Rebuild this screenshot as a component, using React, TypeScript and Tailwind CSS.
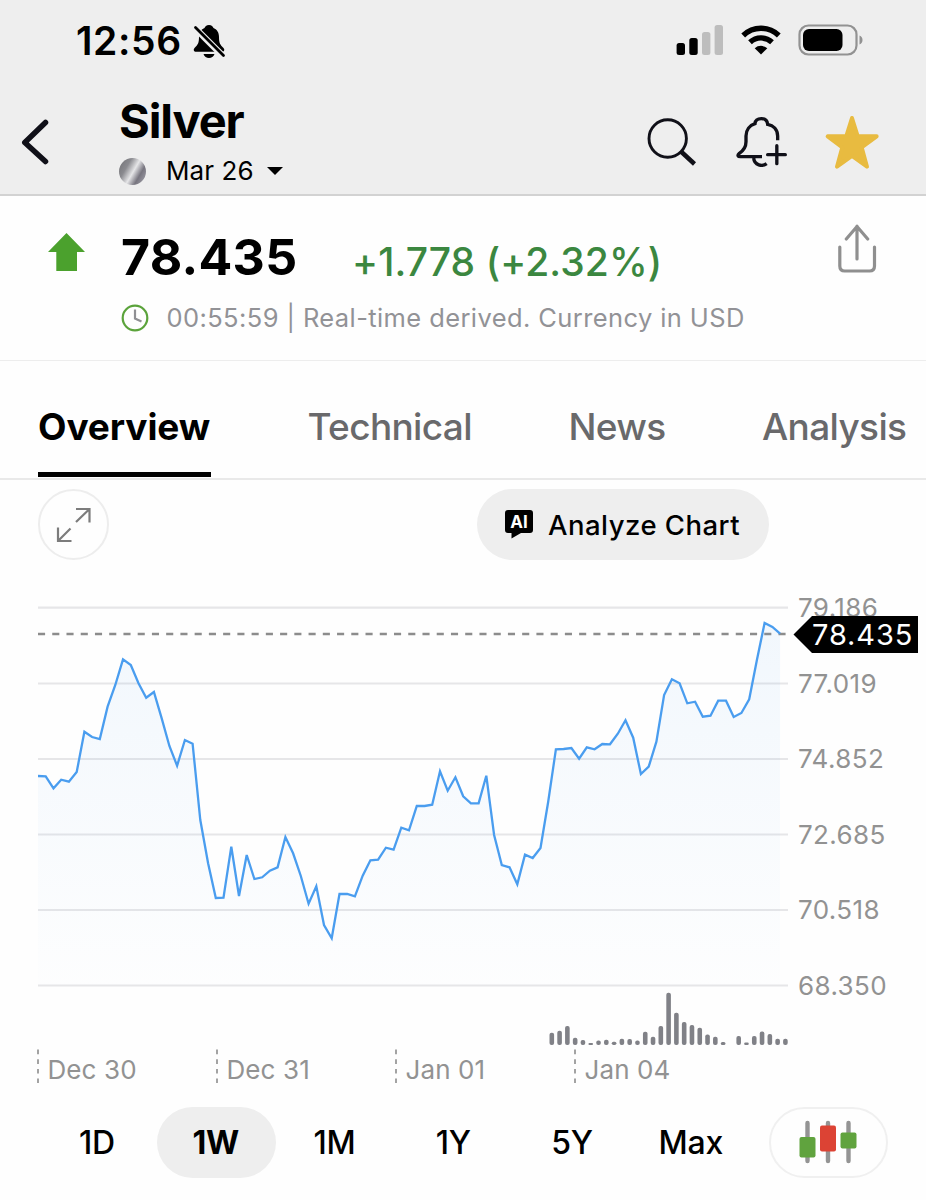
import clsx from "clsx";

// ── Chart data, in plot pixels ──
const STEP = 7.73;
const LINE = [
  558, 559, 595, 569, 575, 546, 425, 441, 447, 350, 285, 208, 225, 280, 323, 306, 385, 468, 527, 450,
  461, 690, 820, 924, 923, 770, 918, 795, 867, 862, 842, 832, 741, 790, 858, 941, 889, 1005, 1045, 912,
  912, 919, 857, 811, 809, 773, 779, 713, 721, 648, 648, 644, 544, 602, 562, 619, 640, 640, 557, 735,
  825, 832, 883, 794, 804, 774, 635, 478, 477, 474, 506, 472, 478, 462, 463, 431, 391, 443, 552, 530,
  455, 315, 268, 280, 340, 335, 380, 377, 332, 332, 381, 369, 328, 210, 99, 111, 131,
];

const VOLUME = [
  12.3, 14.3, 19, 7.3, 5, 2, 4.6, 5.3, 3.3, 6.3, 6, 4.6, 13.3, 8.3, 19, 52.3, 32.3, 23, 20, 17.3,
  10.6, 8.3, 3, 0, 9, 2.6, 9, 13.6, 11, 6.3, 6.3,
];

const GRID = [
  { label: "79.186", y: 607.7 },
  { label: "77.019", y: 683.5 },
  { label: "74.852", y: 759 },
  { label: "72.685", y: 834.5 },
  { label: "70.518", y: 910 },
  { label: "68.350", y: 985.5 },
];

const DATES = [
  { label: "Dec 30", x: 38 },
  { label: "Dec 31", x: 217 },
  { label: "Jan 01", x: 396 },
  { label: "Jan 04", x: 575 },
];

const RANGES = ["1D", "1W", "1M", "1Y", "5Y", "Max"];

const points = LINE.map((v, i) => `${(38 + i * STEP).toFixed(1)},${(590 + v / 3).toFixed(1)}`).join(" ");

function StatusBar() {
  return (
    <div className="flex h-[81px] items-center pl-[76px] pr-[62px]">
      <span className="w-[117px] text-[39px] font-semibold leading-none tracking-[0.6px]">12:56</span>
      <svg viewBox="0 0 34 36" className="h-[36px] w-[34px]">
        <path d="M16 2c-2.600 0-4 1.500-4.500 3C7.500 6.700 6 10 6 14c0 6-1 7.500-4.500 11-1.500 1.700-.6 3.800 1.500 3.800h26c2.200 0 3-2.100 1.500-3.800C27 21.500 26 20 26 14c0-4-1.500-7.300-5.500-9-.5-1.500-1.900-3-4.500-3zM10.500 31h11c-.8 2.700-3 4-5.500 4s-4.700-1.300-5.500-4z" />
        <path d="M0 3l31 31" stroke="#eee" strokeWidth="6.500" />
        <path d="M2.500 4.500l28 28" stroke="#000" strokeWidth="2.800" strokeLinecap="round" />
      </svg>
      <div className="ml-auto flex items-center gap-[17.500px]">
        <svg viewBox="0 0 47 31" className="h-[31px] w-[47px]">
          <rect x="0.600" y="18" width="8.400" height="12" rx="2.500" />
          <rect x="13.300" y="13" width="8.400" height="17" rx="2.500" />
          <rect x="26" y="7" width="8.400" height="23" rx="2.500" fill="#bdbdbd" />
          <rect x="38.600" y="0" width="8.400" height="30" rx="2.500" fill="#bdbdbd" />
        </svg>
        <svg viewBox="0 0 40 30" className="-mt-[1px] h-[30px] w-[40px]">
          <path d="M2.200 10.500a25.500 25.500 0 0 1 35.600 0M9 17.300a16 16 0 0 1 22 0" fill="none" stroke="#000" strokeWidth="5.400" />
          <path d="M20 29.500l-6.300-6.200a9.300 9.300 0 0 1 12.600 0z" />
        </svg>
        <svg viewBox="0 0 66 32" className="-mt-[1px] h-[32px] w-[66px]">
          <rect x="1.500" y="1.500" width="57" height="29" rx="9" fill="none" stroke="#929292" strokeWidth="2.200" />
          <rect x="5" y="5" width="39.500" height="22" rx="6" />
          <path d="M61.500 11.500c4 1.500 4 7.500 0 9z" fill="#929292" />
        </svg>
      </div>
    </div>
  );
}

function TitleBar() {
  return (
    <div className="flex h-[113px]">
      <svg viewBox="0 0 30 46" className="ml-[20px] mt-[38px] h-[46px] w-[30px]" fill="none" stroke="#101018" strokeWidth="5.500" strokeLinecap="round" strokeLinejoin="round">
        <path d="M25.500 3.500L4.800 23.500L25.500 42.500" />
      </svg>
      <div className="ml-[69px] mt-[15px] w-[520px]">
        <h1 className="text-[47px] font-bold leading-[50px] tracking-[-1.1px]">Silver</h1>
        <div className="mt-[5px] flex h-[40px] items-center">
          <span className="size-[27px] rounded-full bg-[linear-gradient(120deg,#77777b_8%,#8a8a8f_30%,#e6e6e8_52%,#77757f_72%,#a9a8b2_100%)]" />
          <span className="ml-[20px] text-[26px] leading-none tracking-[0.1px]">Mar 26</span>
          <svg viewBox="0 0 16 8" className="ml-[13px] h-[8px] w-[16px]">
            <path d="M0 0h16L8 8z" />
          </svg>
        </div>
      </div>
      <div className="mt-[34px] flex">
        <svg viewBox="0 0 56 56" className="ml-[2px] size-[56px]" fill="none" stroke="#101018">
          <circle cx="26.700" cy="23.500" r="18.700" strokeWidth="2.900" />
          <path d="M40 36.500l13.500 12.500" strokeWidth="4.500" />
        </svg>
        <svg viewBox="340 345 170 170" className="ml-[36px] size-[56.67px]" fill="none" stroke="#101018" strokeWidth="10">
          <path d="M474 421V408C474 388 461 376 444 373C443 360 435 356 425 356C415 356 407 360 406 371C390 376 379 390 379 408V425C379 440 372 451 359 460C352 466 355 470 362 470H427" />
          <path d="M402 474C404 496 428 501 441 491" />
          <path d="M471.500 437V491M444 464H497" strokeLinecap="round" />
        </svg>
        <svg viewBox="610 345 170 170" className="ml-[33px] size-[56.67px]" fill="#e8bb40" stroke="#e8bb40" strokeWidth="12" strokeLinejoin="round">
          <path d="M697 354L714 408L771 409L726 442L742 500L697 468L652 500L668 442L624 409L680 408Z" />
        </svg>
      </div>
    </div>
  );
}

function Quote() {
  return (
    <section className="h-[165px] border-b border-[#ededed] pt-[27px]">
      <div className="flex h-[68px] items-center">
        <svg viewBox="0 0 37 38" className="-mt-[10px] ml-[48px] h-[38px] w-[37px]" fill="#4ba12d">
          <path d="M18.500 0L37 19H29V38H8.300V19H0z" />
        </svg>
        <span className="ml-[36px] w-[231px] text-[50px] font-bold leading-none tracking-[0.3px]">78.435</span>
        <span className="mt-[8px] w-[485px] text-[39px] font-medium leading-none tracking-[0.1px] text-[#3b8740]">+1.778 (+2.32%)</span>
        <svg viewBox="0 0 40 50" className="-mt-[18px] h-[50px] w-[40px]" fill="none" stroke="#8f8f8f" strokeWidth="3.200" strokeLinecap="round" strokeLinejoin="round">
          <path d="M2.800 24V43q0 5 5 5H32.500q5 0 5-5V24M20 3V36M9.300 16L20 3.500L30.700 16" />
        </svg>
      </div>
      <div className="flex h-[54px] items-center">
        <svg viewBox="0 0 28 28" className="ml-[121px] size-[28px]" fill="none" strokeWidth="2.200">
          <circle cx="14" cy="14" r="12.300" stroke="#5ba33b" />
          <path d="M14 5.500V14.500L20.500 17.500" stroke="#8f8f93" />
        </svg>
        <span className="ml-[17.500px] whitespace-nowrap text-[25.500px] leading-none tracking-[0.4px] text-[#929296]">
          00:55:59 | Real-time derived. Currency in USD
        </span>
      </div>
    </section>
  );
}

function Tabs() {
  return (
    <nav className="flex h-[118.500px] overflow-hidden whitespace-nowrap border-b-2 border-[#e9e9e9] pl-[38px] text-[37px] font-medium leading-[132px] tracking-[-0.65px] text-[#69696b]">
      <span className="h-[116px] w-[173px] border-b-[5px] border-black font-bold tracking-[-0.1px] text-black">Overview</span>
      <span className="ml-[96.500px] w-[261px]">Technical</span>
      <span className="w-[193.500px]">News</span>
      <span>Analysis</span>
    </nav>
  );
}

function ChartToolbar() {
  return (
    <div className="flex h-[80.500px] items-end pl-[38px]">
      <button className="flex size-[71px] items-center justify-center rounded-full border-2 border-[#ededed]">
        <svg viewBox="0 0 36 36" className="size-[36px]" fill="none" stroke="#7c7c7c" strokeWidth="2.200">
          <path d="M20 2H33.500V15.500M33.500 2L20 15M2 20.500V34H15.500M2 34L14.500 21.500" />
        </svg>
      </button>
      <button className="ml-[367.500px] flex h-[71px] w-[292px] items-center rounded-full bg-[#eee] pl-[28px]">
        <svg viewBox="0 0 28 29" className="h-[29px] w-[28px]">
          <path d="M3 0H25a3 3 0 0 1 3 3V20a3 3 0 0 1-3 3H16L6.500 28.500V23H3a3 3 0 0 1-3-3V3a3 3 0 0 1 3-3z" />
          <text x="14" y="17.800" textAnchor="middle" fill="#fff" className="text-[17px] font-bold">AI</text>
        </svg>
        <span className="ml-[15.500px] mt-[2px] whitespace-nowrap text-[27.500px] font-medium leading-none tracking-[0.48px]">Analyze Chart</span>
      </button>
    </div>
  );
}

function Chart() {
  return (
    <svg viewBox="0 560 926 547" className="h-[547px] w-[926px]">
      <defs>
        <linearGradient id="area" x1="0" y1="620" x2="0" y2="986" gradientUnits="userSpaceOnUse">
          <stop offset="0" stopColor="#3d94ea" stopOpacity="0.065" />
          <stop offset="1" stopColor="#3d94ea" stopOpacity="0.005" />
        </linearGradient>
      </defs>

      {/* Price grid */}
      {GRID.map((g) => (
        <g key={g.label}>
          <path d={`M38 ${g.y}H788`} stroke="#e6e6e8" strokeWidth="2.200" />
          <text x="798" y={g.y + 9} fill="#929292" className="text-[26px] tracking-[0.4px]">{g.label}</text>
        </g>
      ))}
      <path d="M38 634H788" stroke="#8c8c8c" strokeWidth="2.500" strokeDasharray="7.100 7.140" />

      {/* Price line */}
      <polygon points={`38,985 ${points} 780,985`} fill="url(#area)" />
      <polyline points={points} fill="none" stroke="#4a9def" strokeWidth="2.300" />

      {/* Last price tag */}
      <path d="M793.500 634.500L812 616H918V653H812z" />
      <text x="812" y="645" fill="#fff" className="text-[29px] tracking-[0.9px]">78.435</text>

      {/* Volume */}
      {VOLUME.map((h, i) =>
        h > 0 ? (
          <rect key={i} x={549.500 + i * 7.787} y={1045 - h} width="4.600" height={h} rx={Math.min(2, h / 2)} fill="#808187" />
        ) : null,
      )}

      {DATES.map((d) => (
        <g key={d.label}>
          <path d={`M${d.x} 1049.500V1083`} stroke="#9a9a9a" strokeWidth="1.800" strokeDasharray="4.700 5" />
          <text x={d.x + 9.500} y="1079" fill="#929292" className="text-[26px] tracking-[0.1px]">{d.label}</text>
        </g>
      ))}
    </svg>
  );
}

function RangePicker() {
  return (
    <div className="flex h-[70.500px] pl-[38px] text-[32px] font-medium">
      {RANGES.map((r) => (
        <button
          key={r}
          className={clsx(
            "flex w-[118.800px] items-center justify-center rounded-full pr-[1px] pt-[2px] tracking-[-0.2px]",
            r === "1W" && "bg-[#eee] font-bold",
          )}
        >
          {r}
        </button>
      ))}
      <button className="ml-[18px] flex w-[119px] items-center justify-center rounded-full border-2 border-[#f0f0f0]">
        <svg viewBox="0 0 58 44" className="h-[44px] w-[58px]">
          <path d="M8.500 3V41M29 3V41M49.500 3V41" stroke="#949494" strokeWidth="4.400" strokeLinecap="round" />
          <rect x="0.500" y="17" width="16" height="20.500" rx="2" fill="#60a33e" />
          <rect x="21" y="5.500" width="16" height="26" rx="2" fill="#dc4334" />
          <rect x="41.500" y="12.500" width="16" height="16" rx="2" fill="#60a33e" />
        </svg>
      </button>
    </div>
  );
}

export default function App() {
  return (
    <main className="h-[1200px] w-[926px] overflow-hidden bg-[#fefefe] font-['Inter',sans-serif] text-black">
      <header className="h-[196px] border-b-2 border-[#d2d2d2] bg-[#eee]">
        <StatusBar />
        <TitleBar />
      </header>
      <Quote />
      <Tabs />
      <ChartToolbar />
      <Chart />
      <RangePicker />
    </main>
  );
}
